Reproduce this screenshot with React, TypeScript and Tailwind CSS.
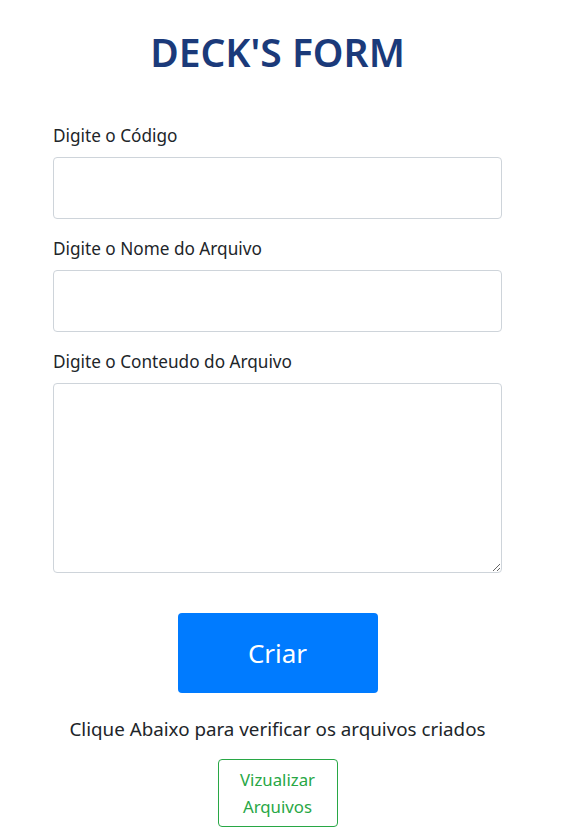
import React from "react";

const font = { fontFamily: '"Noto Sans", "Open Sans", sans-serif' };

function Field({ label, area = false }: { label: string; area?: boolean }) {
  return (
    <div className="mb-[17px] flex flex-col">
      <label className="mb-[9px] pt-[1px] text-[17.2px] leading-6 text-[#212529]">{label}</label>
      {area ? (
        <textarea className="h-[190px] w-full rounded border border-[#ced4da] bg-white px-3 py-2 outline-none" />
      ) : (
        <input type="text" className="h-[62px] w-full rounded border border-[#ced4da] bg-white px-3 outline-none" />
      )}
    </div>
  );
}

export default function App() {
  return (
    <div className="min-h-screen w-full bg-white" style={font}>
      <div className="flex w-[555px] flex-col items-center pt-[28px]">
        <h1 className="text-[39px] font-semibold leading-[48px] text-[#1b3a7a]">DECK'S FORM</h1>
        <form className="mt-[47px] flex w-[449px] flex-col">
          <Field label="Digite o Código" />
          <Field label="Digite o Nome do Arquivo" />
          <Field label="Digite o Conteudo do Arquivo" area />
        </form>
        <button className="mt-[23px] h-[80px] w-[200px] rounded bg-[#007bff] text-[26px] text-white">
          Criar
        </button>
        <p className="mt-[23px] text-[18.8px] leading-[27px] text-[#212529]">
          Clique Abaixo para verificar os arquivos criados
        </p>
        <button className="mt-[16px] flex h-[68px] w-[120px] flex-col items-center justify-center rounded border border-[#28a745] text-[16.8px] leading-[27px] text-[#28a745]">
          <span>Vizualizar</span>
          <span>Arquivos</span>
        </button>
      </div>
    </div>
  );
}
